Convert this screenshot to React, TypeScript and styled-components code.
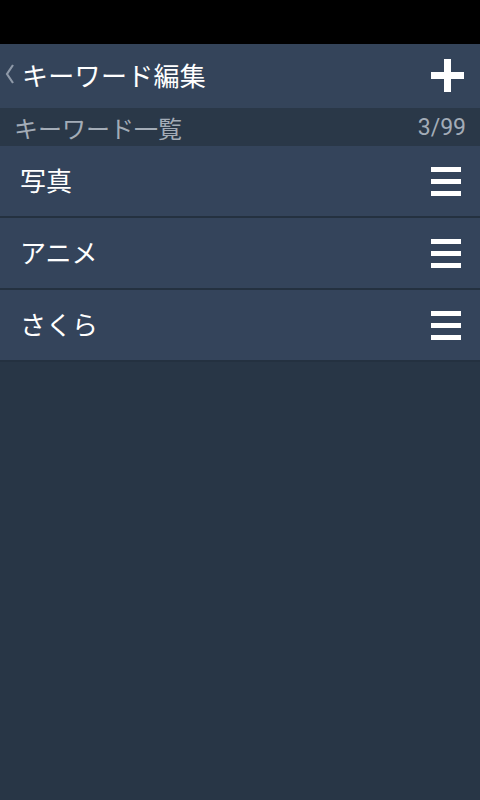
import React from "react";
import styled, { createGlobalStyle } from "styled-components";

const Global = createGlobalStyle`
  html, body { margin: 0; padding: 0; background: #283646; }
  body { font-family: "Roboto", "Noto Sans CJK JP", sans-serif; }
`;

const Screen = styled.div`
  width: 480px;
  height: 800px;
  display: flex;
  flex-direction: column;
  background: #283646;
  overflow: hidden;
`;

const StatusBar = styled.div`
  height: 44px;
  background: #000;
  flex-shrink: 0;
`;

const Header = styled.div`
  height: 64px;
  background: #34445a;
  display: flex;
  align-items: center;
  padding: 0 16px 0 4px;
  box-sizing: border-box;
`;

const Back = styled.svg`
  width: 18px;
  height: 24px;
  margin-top: -4px;
`;

const Title = styled.h1`
  margin: -4px 0 0;
  flex: 1;
  color: #ffffff;
  font-size: 26px;
  font-weight: 400;
  font-family: "Roboto", "Noto Sans CJK JP", sans-serif;
  letter-spacing: 0.3px;
`;

const Plus = styled.svg`
  width: 33px;
  height: 33px;
  margin-top: -2px;
`;

const SubHeader = styled.div`
  height: 38px;
  background: #2a3848;
  display: flex;
  align-items: center;
  justify-content: space-between;
  padding: 0 14px;
  color: #a3acb7;
  font-size: 24px;
`;

const Count = styled.span`
  font-family: "Roboto", sans-serif;
  font-size: 23px;
`;

const List = styled.div`
  display: flex;
  flex-direction: column;
`;

const Row = styled.div`
  height: 70px;
  background: #34445b;
  display: flex;
  align-items: center;
  justify-content: space-between;
  padding: 0 19px 0 20px;
  border-bottom: 2px solid #243140;
  box-sizing: content-box;
  color: #fff;
  font-size: 26px;
`;

const Label = styled.span`
  margin-top: -4px;
`;

const Handle = styled.div`
  width: 30px;
  display: flex;
  flex-direction: column;
  gap: 7px;
  margin-top: 1px;
`;

const Bar = styled.div`
  height: 5px;
  background: #ffffff;
`;

const items = ["写真", "アニメ", "さくら"];

export default function App() {
  return (
    <>
      <Global />
      <Screen>
        <StatusBar />
        <Header>
          <Back viewBox="0 0 18 24">
            <polyline
              points="9,3 3,12 9,21"
              fill="none"
              stroke="#8e99a8"
              strokeWidth="2.2"
              strokeLinejoin="miter"
            />
          </Back>
          <Title>キーワード編集</Title>
          <Plus viewBox="0 0 33 33">
            <rect x="0" y="13" width="33" height="7" fill="#fff" />
            <rect x="13" y="0" width="7" height="33" fill="#fff" />
          </Plus>
        </Header>
        <SubHeader>
          <span>キーワード一覧</span>
          <Count>3/99</Count>
        </SubHeader>
        <List>
          {items.map((t) => (
            <Row key={t}>
              <Label>{t}</Label>
              <Handle>
                <Bar />
                <Bar />
                <Bar />
              </Handle>
            </Row>
          ))}
        </List>
      </Screen>
    </>
  );
}
